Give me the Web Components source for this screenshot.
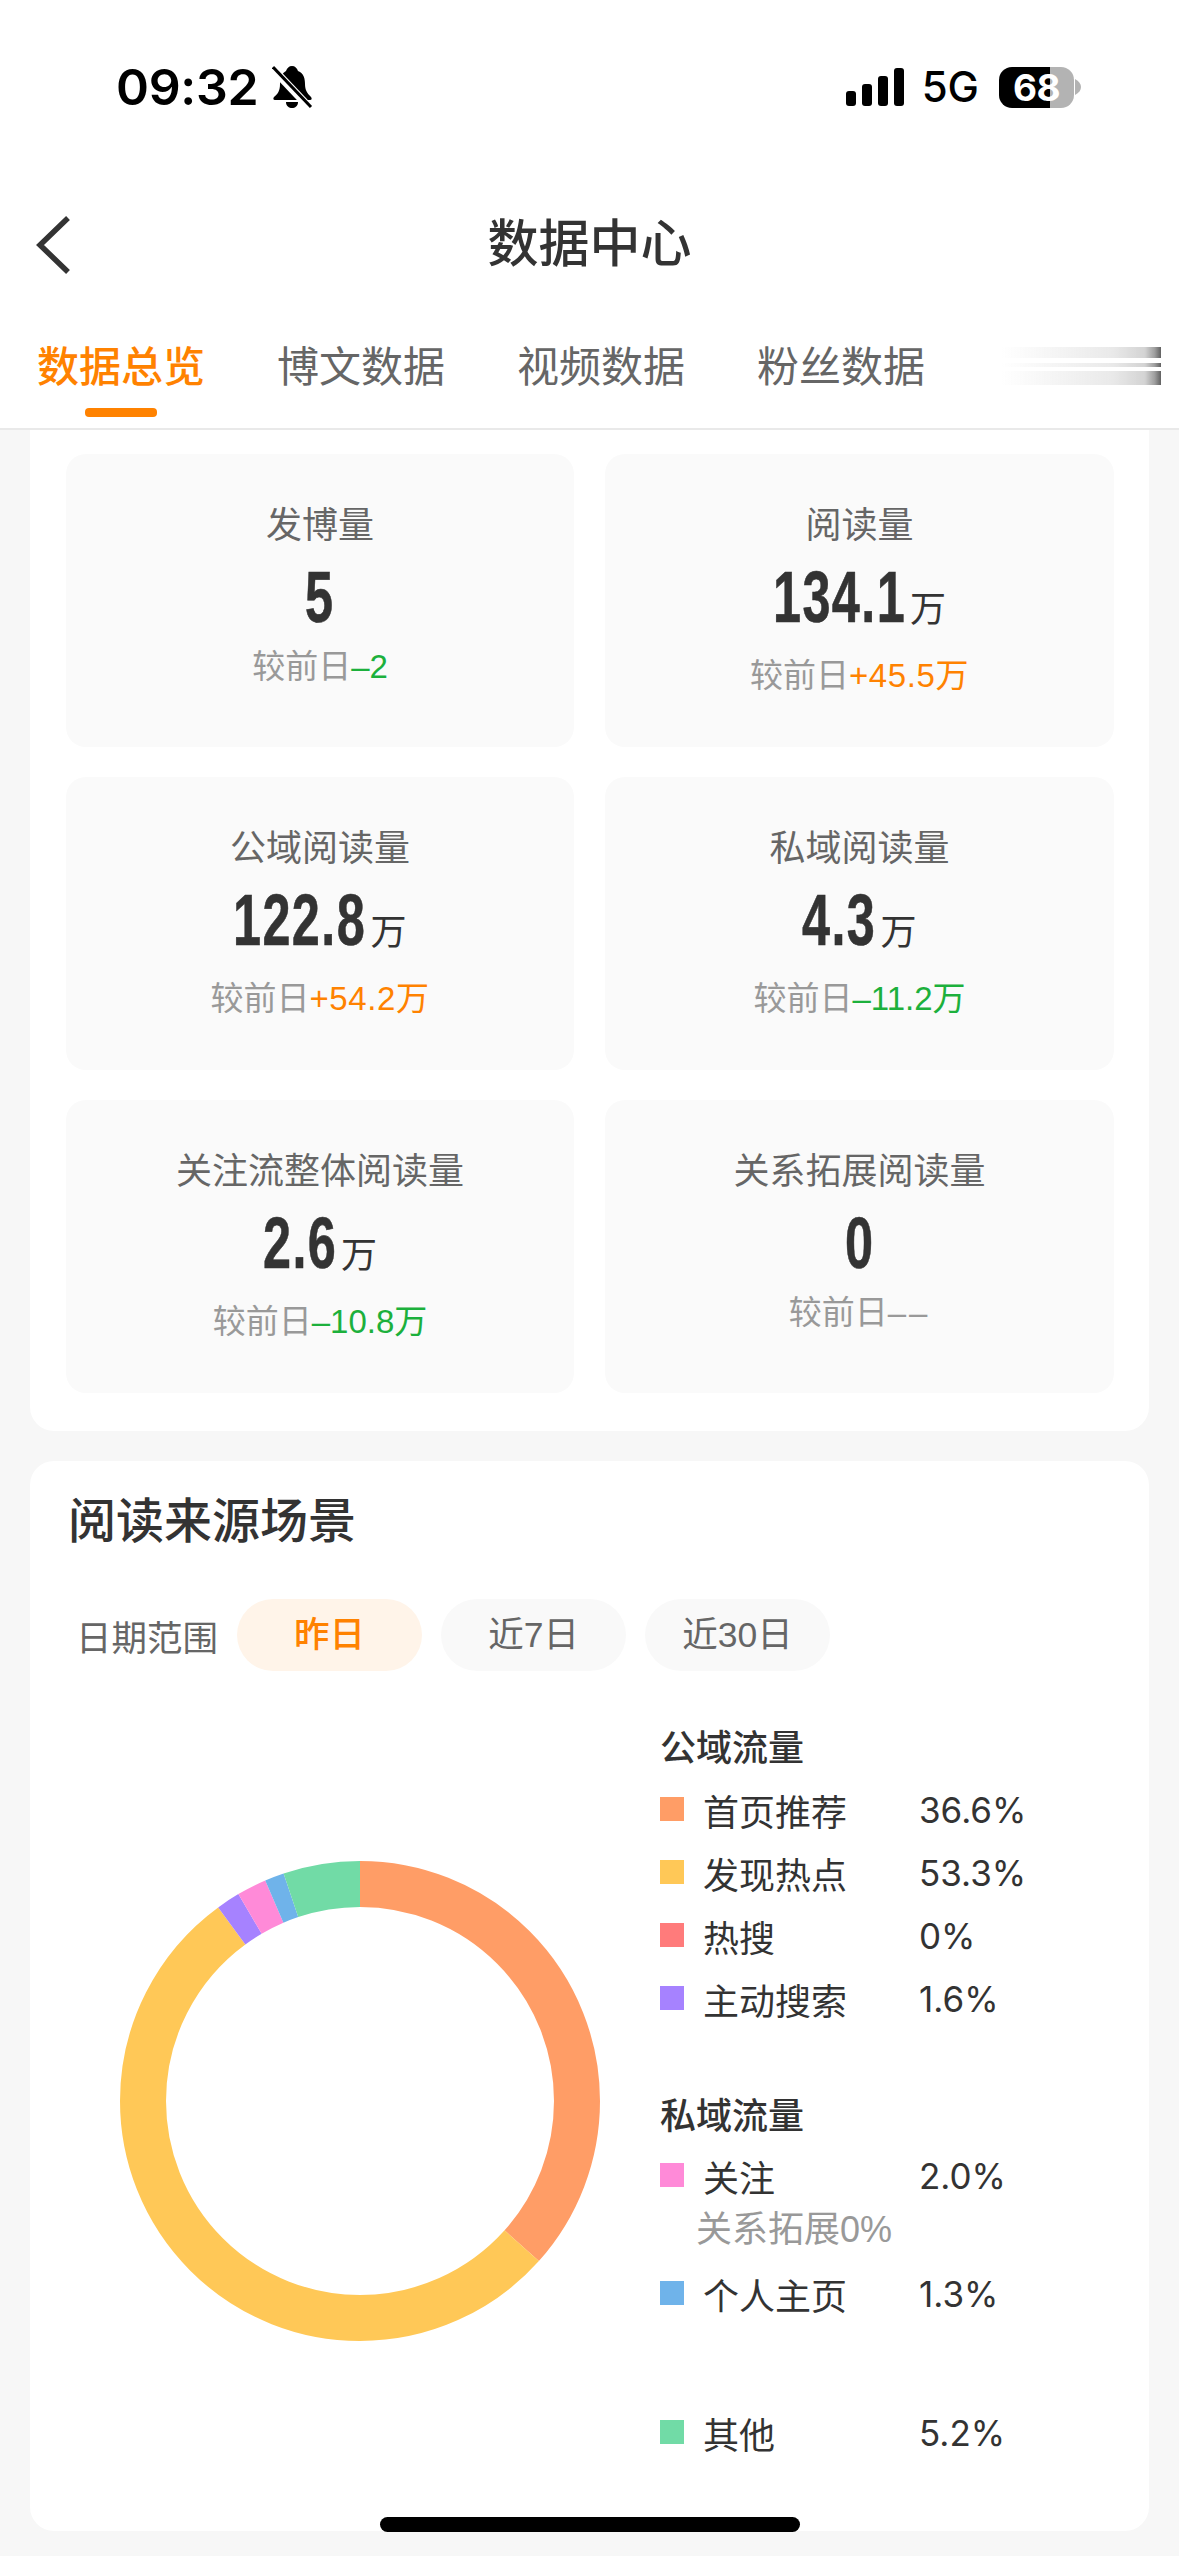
<!DOCTYPE html>
<html lang="zh">
<head>
<meta charset="utf-8">
<title>数据中心</title>
<style>
  html, body { margin: 0; padding: 0; background: #f7f7f7; }
  body { width: 1179px; height: 2556px; overflow: hidden; position: relative; font-family: "Liberation Sans", "Noto Sans CJK SC", sans-serif; color: #333; }
</style>
</head>
<body>
<status-bar></status-bar>
<nav-bar>数据中心</nav-bar>
<tab-bar>
  <tab-item active>数据总览</tab-item>
  <tab-item>博文数据</tab-item>
  <tab-item>视频数据</tab-item>
  <tab-item>粉丝数据</tab-item>
  <blur-tab></blur-tab>
</tab-bar>

<white-card class="first">
  <stat-grid>
    <stat-tile label="发博量" value="5" delta="–2" tone="down"></stat-tile>
    <stat-tile label="阅读量" value="134.1" unit="万" delta="+45.5万" tone="up"></stat-tile>
    <stat-tile label="公域阅读量" value="122.8" unit="万" delta="+54.2万" tone="up"></stat-tile>
    <stat-tile label="私域阅读量" value="4.3" unit="万" delta="–11.2万" tone="down"></stat-tile>
    <stat-tile label="关注流整体阅读量" value="2.6" unit="万" delta="–10.8万" tone="down"></stat-tile>
    <stat-tile label="关系拓展阅读量" value="0" delta="––" tone="none"></stat-tile>
  </stat-grid>
</white-card>

<white-card>
  <source-panel>
    <legend-head>公域流量</legend-head>
    <legend-row color="#ff9d66" pct="36.6%">首页推荐</legend-row>
    <legend-row color="#ffc857" pct="53.3%">发现热点</legend-row>
    <legend-row color="#ff7b7b" pct="0%">热搜</legend-row>
    <legend-row color="#a682ff" pct="1.6%">主动搜索</legend-row>
    <legend-head class="gap">私域流量</legend-head>
    <legend-row color="#ff8ad8" pct="2.0%">关注</legend-row>
    <legend-note>关系拓展0%</legend-note>
    <legend-row color="#6fb3ea" pct="1.3%">个人主页</legend-row>
    <legend-row class="other" color="#71dba6" pct="5.2%">其他</legend-row>
  </source-panel>
</white-card>

<home-bar></home-bar>

<script>
// small helper, every element just gets an open shadow root with this html
function shadow(el, html) {
  el.attachShadow({ mode: 'open' }).innerHTML = html;
}

customElements.define('status-bar', class extends HTMLElement {
  constructor() {
    super();
    shadow(this, `
    <style>
      :host { display: flex; height: 170px; background: #fff; box-sizing: border-box; padding: 0 98px 0 116px; align-items: flex-start; justify-content: space-between; color: #000; }
      .left, .right { display: flex; align-items: center; height: 174px; }
      .time { font: 600 50px/1 Inter, sans-serif; letter-spacing: -0.3px; }
      .bell { margin-left: 14px; }
      .net { font: 500 42px/1 Inter, sans-serif; margin: 0 20px 0 18px; }
      .batt { width: 75px; height: 41px; border-radius: 13px; background: linear-gradient(90deg, #000 0 51px, #b3b3b3 51px); color: #fff; font: 700 37px/41px Inter, sans-serif; text-align: center; letter-spacing: -0.5px; }
      .nub { margin-left: 1px; }
    </style>
    <div class="left">
      <span class="time">09:32</span>
      <svg class="bell" width="41" height="44" viewBox="0 0 41 44">
        <path d="M20 1c3 0 5 2 6 5 6 2 7 8 7 13 0 6 2 9 6 13 1 1 1 3-1 3H3c-2 0-2-2-1-3 4-3 6-7 6-13 0-6 2-11 6-13 1-3 3-5 6-5z" fill="#000"/>
        <path d="M14 37h12c0 4-3 6-6 6s-6-2-6-6z" fill="#000"/>
        <path d="M1 4l36 38" stroke="#fff" stroke-width="8"/>
        <path d="M1 2l38 40" stroke="#000" stroke-width="3"/>
      </svg>
    </div>
    <div class="right">
      <svg width="58" height="38" viewBox="0 0 58 38">
        <rect x="0" y="23" width="10" height="15" rx="3"/>
        <rect x="16" y="16" width="10" height="22" rx="3"/>
        <rect x="32" y="8" width="10" height="30" rx="3"/>
        <rect x="48" y="0" width="10" height="38" rx="3"/>
      </svg>
      <span class="net">5G</span>
      <span class="batt">68</span>
      <svg class="nub" width="6" height="16" viewBox="0 0 6 16"><path d="M0 0c4 2 6 5 6 8s-2 6-6 8z" fill="#b3b3b3"/></svg>
    </div>`);
  }
});

customElements.define('nav-bar', class extends HTMLElement {
  constructor() {
    super();
    shadow(this, `
    <style>
      :host { display: grid; grid-template-columns: 1fr auto 1fr; align-items: center; height: 150px; background: #fff; }
      svg { margin-left: 36px; display: block; }
      .title { font-size: 51px; font-weight: 500; color: #333; line-height: 150px; }
    </style>
    <svg width="34" height="58" viewBox="0 0 34 58" fill="none"><path d="M32 2L4 29l28 27" stroke="#333" stroke-width="5.5"/></svg>
    <div class="title"><slot></slot></div>
    <div></div>`);
  }
});

customElements.define('tab-bar', class extends HTMLElement {
  constructor() {
    super();
    shadow(this, `
    <style>
      :host { display: flex; gap: 72px; height: 110px; box-sizing: border-box; background: #fff; padding-left: 37px; border-bottom: 2px solid #e9e9e9; overflow: hidden; }
    </style>
    <slot></slot>`);
  }
});

customElements.define('tab-item', class extends HTMLElement {
  constructor() {
    super();
    shadow(this, `
    <style>
      :host { display: block; position: relative; font-size: 42px; line-height: 96px; color: #666; white-space: nowrap; }
      :host([active]) { color: #ff8200; font-weight: 500; }
      i { display: none; width: 72px; height: 9px; border-radius: 4px; background: #ff8200; margin: -8px auto 0; }
      :host([active]) i { display: block; }
    </style>
    <slot></slot><i></i>`);
  }
});

// the last tab in the reference is smudged out, so it is only grey bands
customElements.define('blur-tab', class extends HTMLElement {
  constructor() {
    super();
    shadow(this, `
    <style>
      :host { display: flex; flex-direction: column; width: 161px; padding-top: 27px; margin-left: 3px; }
      b { display: block; background: linear-gradient(90deg, rgba(120,120,120,0), rgba(120,120,120,.03) 15%, rgba(120,120,120,.16) 70%, rgba(110,110,110,.3) 90%, rgba(80,80,80,.55) 96%, rgba(70,70,70,.85)); filter: blur(.7px); }
      .a { height: 11px; }
      .b { height: 4px; margin: 5px 0 4px; }
      .c { height: 14px; }
    </style>
    <b class="a"></b><b class="b"></b><b class="c"></b>`);
  }
});

customElements.define('white-card', class extends HTMLElement {
  constructor() {
    super();
    shadow(this, `
    <style>
      :host { display: block; background: #fff; margin: 30px 30px 0; border-radius: 24px; }
      :host(.first) { margin-top: 0; border-radius: 0 0 24px 24px; }
    </style>
    <slot></slot>`);
  }
});

customElements.define('stat-grid', class extends HTMLElement {
  constructor() {
    super();
    shadow(this, `
    <style>
      :host { display: grid; grid-template-columns: 508px 509px; grid-auto-rows: 293px; column-gap: 31px; row-gap: 30px; padding: 24px 35px 38px 36px; }
    </style>
    <slot></slot>`);
  }
});

// there is no condensed family here, so the big number is squeezed by hand.
// advance widths of Liberation Sans Bold: digits .556em, dot .278em, plus the tracking
var NUM_SIZE = 72, NUM_SQUEEZE = 0.7, NUM_TRACK = 2;
function numWidth(str) {
  var w = 0;
  for (var i = 0; i < str.length; i++) w += (str[i] == '.' ? 0.278 : 0.556) * NUM_SIZE + NUM_TRACK;
  return w * NUM_SQUEEZE;
}

customElements.define('stat-tile', class extends HTMLElement {
  connectedCallback() {
    if (this.shadowRoot) return;
    var unit = this.getAttribute('unit');
    var tone = this.getAttribute('tone');
    var value = this.getAttribute('value');
    shadow(this, `
    <style>
      :host { display: flex; flex-direction: column; align-items: center; background: #fafafa; border-radius: 20px; padding-top: 47px; box-sizing: border-box; }
      .label { font-size: 36px; line-height: 50px; color: #666; }
      .value { display: flex; align-items: baseline; height: 70px; margin-top: 11px; color: #333; line-height: 70px; }
      .value.has-unit { height: 79px; }
      .box { display: block; }
      .num { display: inline-block; font: 700 ${NUM_SIZE}px/70px "Liberation Sans", sans-serif; letter-spacing: ${NUM_TRACK}px; transform: scaleX(${NUM_SQUEEZE}); transform-origin: left center; -webkit-text-stroke: .6px #333; }
      .unit { font-size: 36px; margin-left: 4px; }
      .sub { font-size: 33px; line-height: 40px; color: #999; margin-top: 15px; white-space: nowrap; }
      .up { letter-spacing: .6px; }
      .down { color: #1cb03c; }
      .up { color: #ff8200; }
      .none { color: #999; letter-spacing: 3px; }
    </style>
    <div class="label">${this.getAttribute('label')}</div>
    <div class="value ${unit ? 'has-unit' : ''}"><span class="box" style="width:${numWidth(value)}px"><span class="num">${value}</span></span>${unit ? `<span class="unit">${unit}</span>` : ''}</div>
    <div class="sub">较前日<span class="${tone}">${this.getAttribute('delta')}</span></div>`);
  }
});

customElements.define('source-panel', class extends HTMLElement {
  constructor() {
    super();
    // donut numbers: share of the circle, in drawing order from 12 o'clock
    var parts = [[36.6, '#ff9d66'], [53.3, '#ffc857'], [1.6, '#a682ff'], [2.0, '#ff8ad8'], [1.3, '#6fb3ea'], [5.2, '#71dba6']];
    var r = 217, c = 2 * Math.PI * r, run = 0, rings = '';
    parts.forEach(function (p) {
      var len = p[0] / 100 * c;
      rings += `<circle cx="241" cy="241" r="${r}" fill="none" stroke="${p[1]}" stroke-width="46" stroke-dasharray="${len} ${c - len}" stroke-dashoffset="${-run}" transform="rotate(-90 241 241)"/>`;
      run += len;
    });
    shadow(this, `
    <style>
      :host { display: block; height: 1070px; box-sizing: border-box; padding-top: 31px; }
      h2 { margin: 0 0 0 38px; font-size: 48px; line-height: 60px; font-weight: 500; color: #333; }
      .range { display: flex; align-items: center; gap: 19px; margin: 47px 0 0 46px; height: 72px; font-size: 35.5px; color: #666; }
      .pill { width: 185px; height: 72px; border-radius: 36px; background: #f9f9f9; line-height: 72px; text-align: center; }
      .pill.on { background: #fff4e9; color: #ff8200; font-weight: 500; }
      .body { display: flex; margin-top: 52px; }
      svg { display: block; margin: 137px 59px 0 89px; flex: none; }
      .legend { flex: 1; }
    </style>
    <h2>阅读来源场景</h2>
    <div class="range">
      <span>日期范围</span>
      <span class="pill on">昨日</span>
      <span class="pill">近7日</span>
      <span class="pill">近30日</span>
    </div>
    <div class="body">
      <svg width="482" height="482" viewBox="0 0 482 482">${rings}</svg>
      <div class="legend"><slot></slot></div>
    </div>`);
  }
});

customElements.define('legend-head', class extends HTMLElement {
  constructor() {
    super();
    shadow(this, `
    <style>
      :host { display: block; font-size: 36px; line-height: 50px; font-weight: 500; color: #333; padding-top: 1px; margin-bottom: -3px; }
      :host(.gap) { margin-top: 68px; margin-bottom: -5px; }
    </style>
    <slot></slot>`);
  }
});

customElements.define('legend-row', class extends HTMLElement {
  connectedCallback() {
    if (this.shadowRoot) return;
    shadow(this, `
    <style>
      :host { display: grid; grid-template-columns: 43px 216px auto; align-items: center; height: 50px; margin-top: 13px; font-size: 36px; color: #333; }
      :host(.other) { margin-top: 89px; }
      i { display: block; width: 24px; height: 24px; margin-top: -2px; }
      .pct { font: 400 35px/50px Inter, sans-serif; }
    </style>
    <i style="background:${this.getAttribute('color')}"></i>
    <span><slot></slot></span>
    <span class="pct">${this.getAttribute('pct')}</span>`);
  }
});

customElements.define('legend-note', class extends HTMLElement {
  constructor() {
    super();
    shadow(this, `
    <style>
      :host { display: block; font-size: 36px; line-height: 50px; color: #999; padding-left: 36px; margin-top: 5px; margin-bottom: 0; }
    </style>
    <slot></slot>`);
  }
});

// iOS home indicator, lies over the card
customElements.define('home-bar', class extends HTMLElement {
  constructor() {
    super();
    shadow(this, `
    <style>
      :host { display: block; position: absolute; left: 380px; top: 2517px; width: 420px; height: 15px; background: #000; border-radius: 8px; }
    </style>`);
  }
});
</script>
</body>
</html>
